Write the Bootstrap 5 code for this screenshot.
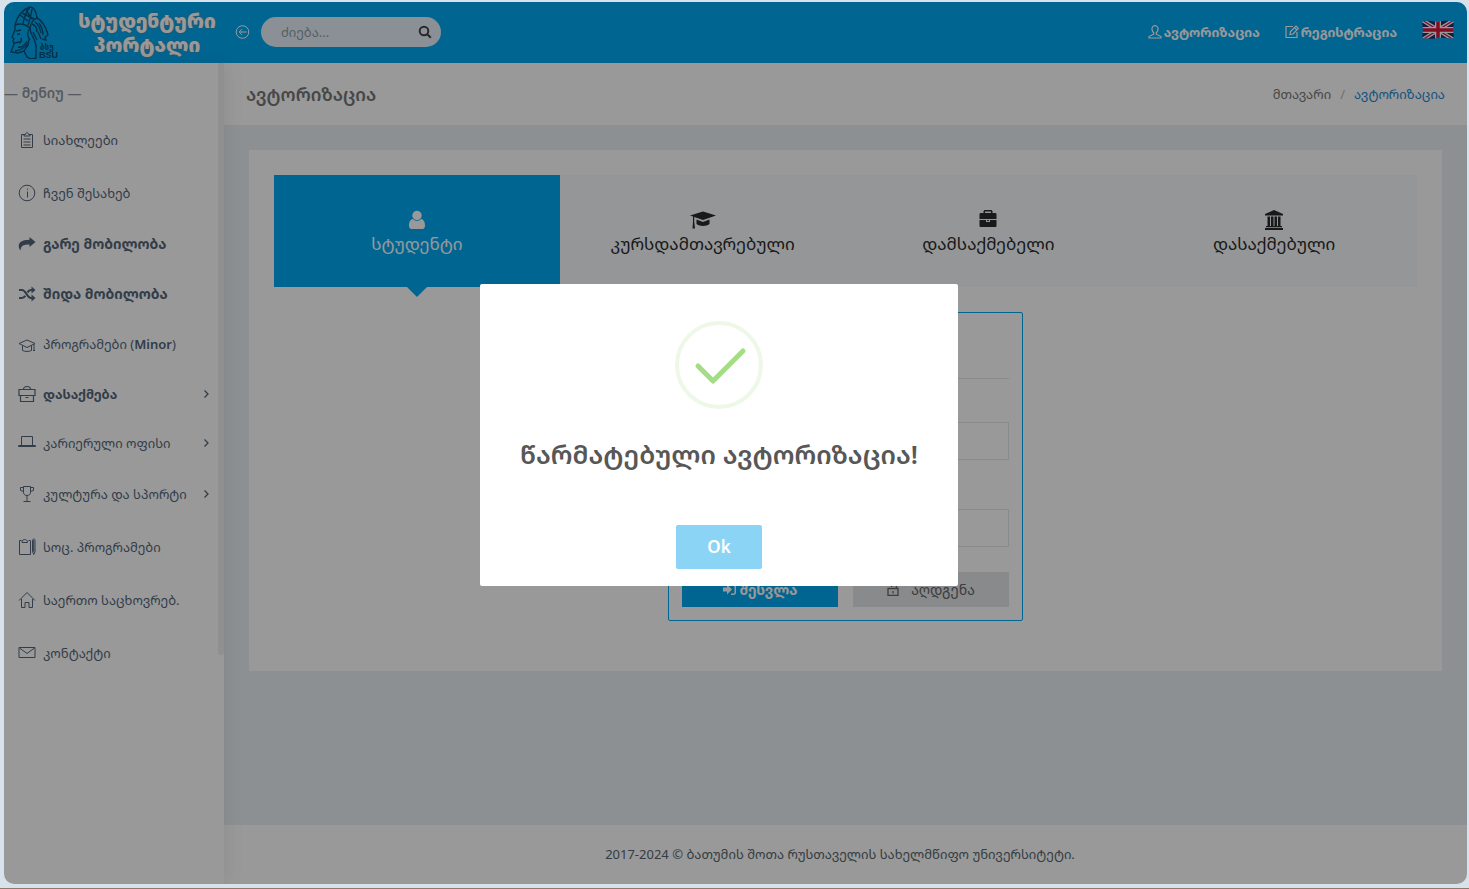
<!DOCTYPE html>
<html lang="ka">
<head>
<meta charset="utf-8">
<meta name="viewport" content="width=device-width, initial-scale=1">
<title>სტუდენტური პორტალი</title>
<link href="https://cdn.jsdelivr.net/npm/bootstrap@5.3.0/dist/css/bootstrap.min.css" rel="stylesheet">
<style>
  :root { --brand: #03a9f3; --ink: #54667a; }
  body { font-family: "Noto Sans", "Noto Sans Georgian", "DejaVu Sans", sans-serif; font-size: 13px; line-height: 20px; color: var(--ink); background: #d7e2ec; min-height: 100vh; padding: 2px 2px 4px 4px; border-bottom: 1px solid #8d7a68; }
  svg { display: block; flex: none; }
  a { text-decoration: none; color: inherit; }
  .portal { border-radius: 10px; background: #ebf1f4; }
  .topbar { background: var(--brand); height: 61px; color: #fff; padding-bottom: 2px; }
  .brand { width: 220px; padding-left: 6px; }
  .brand-name { flex: 1; font-size: 19px; line-height: 24px; font-weight: 900; color: #fff; text-shadow: 0 0 2px #777; padding: 2px 0 0 2px; }
  .top-tools { gap: 11px; padding-left: 11px; }
  .search-box { width: 180px; height: 30px; border-radius: 15px; background: #e6f1f8; padding: 0 9px 0 20px; }
  .search-box input { font-size: 13px; }
  .search-box input::placeholder { color: #8d9ea7; }
  .top-links { gap: 25px; padding-right: 13px; }
  .top-links a { gap: 2px; }
  .sidebar { width: 220px; background: #fff; box-shadow: 1px 0 20px rgba(0,0,0,.08); z-index: 1; }
  .side-scroll { width: 6px; height: 592px; background: #f0f0f0; border-radius: 0 0 4px 4px; top: 0; right: 0; }
  .menu-title { height: 50px; padding-top: 20px; font-size: 14px; color: #8d97a3; }
  .menu-link { height: 53px; padding: 0 14px; gap: 7px; }
  .menu-mid { height: 50px; }
  .menu-low { height: 48px; }
  .menu-big { font-size: 14px; }
  .ico { fill: none; stroke: currentColor; stroke-width: 1; }
  .page-title { background: #fff; height: 62px; padding: 0 22px; }
  .page-title h1 { font-size: 18px; line-height: 24px; color: #777; }
  .crumb { color: #777; gap: 9px; }
  .crumb .here { color: #1e88d2; }
  .work { padding: 25px; min-height: 600px; }
  .panel { background: #fff; padding: 25px 25px 50px; }
  .tab { flex: 1; height: 112px; border: 0; background: #f7fafc; color: #2b2b2b; font-size: 17px; line-height: 24px; padding-top: 3px; gap: 1px; }
  .tab.on { background: var(--brand); color: #fff; position: relative; }
  .tab.on::after { content: ""; position: absolute; top: 100%; left: 50%; margin-left: -10px; border: 10px solid transparent; border-top-color: var(--brand); border-bottom: 0; }
  .login { width: 355px; margin-top: 25px; border: 1px solid var(--brand); border-radius: 2px; padding: 65px 13px 13px; }
  .login hr { margin: 0 0 43px; border-color: #e4e7ea; opacity: 1; }
  .login .form-control { height: 38px; border: 1px solid #e4e7ea; border-radius: 0; margin-bottom: 49px; }
  .login .last { margin-bottom: 25px; }
  .acts { gap: 15px; }
  .act { flex: 1; height: 35px; border-radius: 0; font-size: 14px; line-height: 20px; padding: 0; }
  .act-go, .act-go:hover { background: var(--brand); color: #fff; }
  .act-reset, .act-reset:hover { background: #e4e7ea; color: #666; }
  .foot { background: #fff; height: 59px; color: #58666e; padding: 0 11px 2px 0; }
  .shade { inset: 0; background: rgba(0,0,0,.4); z-index: 5; padding: 0 33px 16px 0; }
  .alert-card { width: 478px; min-height: 302px; background: #fff; border-radius: 2px; padding: 37px 17px 17px; }
  .alert-card h2 { font-size: 26px; line-height: 40px; color: #575757; margin: 25px 0 51px; white-space: nowrap; }
  .ok { width: 86px; height: 44px; background: #8cd4f5; color: #fff; border: 0; border-radius: 2px; font-size: 17px; font-weight: 600; }
</style>
</head>
<body class="d-flex flex-column">
<div class="portal position-relative overflow-hidden flex-grow-1 d-flex flex-column">
  <header class="topbar d-flex align-items-center">
    <a href="#" class="brand d-flex align-items-center">
      <svg width="58" height="54" viewBox="0 0 58 54" fill="none" stroke="#035078" stroke-width="1.4">
        <path d="M5 20c2-8 6-15 15-18 4 0 6 4 7 11 4 2 9 8 11 17l-3 2 1 3-4-1"/>
        <path d="M5 20v5l-3 7 2 2-1 2 1 3-3 8 7 1 6-2 4-6 1-6M14 46l3 6c3 2 7 2 9 1V40M5 20c5-2 10-1 15 3"/>
        <path d="M20 2c-4 5-6 10-7 17M22 4c-1 6-2 11-4 16M16 5l6 9M10 10l8 6M12 8l12 6M27 13c-3 1-6 4-7 10 0 5 2 7 4 11l2 6"/>
        <path d="M22 19c3 1 5 4 5 8M25 17c3 2 5 6 6 11M29 18c3 4 4 8 4 12M20 23c-3 3-3 8 0 12M23 27l4 8M28 27l3 7M6 26l5-1M7 29h3M4 38l6-1M8 42c4 1 7-2 9-6M5 46c6-1 10-3 13-8M11 33c1 2 0 4-2 5"/>
        <g stroke="none" fill="#035078" font-size="9" font-weight="700" font-family="Liberation Sans, DejaVu Sans, sans-serif"><text x="30" y="45" font-size="8">ბსუ</text><text x="29" y="53">BSU</text></g>
      </svg>
      <span class="brand-name text-center">სტუდენტური<br>პორტალი</span>
    </a>
    <div class="top-tools d-flex align-items-center">
      <a href="#" aria-label="მენიუ"><svg class="ico" width="15" height="14" viewBox="0 0 14 14"><circle cx="7" cy="7" r="6.3"/><path d="M11 7H4M6.500 4.200L3.700 7l2.800 2.800"/></svg></a>
      <form class="search-box d-flex align-items-center" role="search">
        <input class="border-0 bg-transparent p-0 flex-grow-1 w-100" type="text" aria-label="ძიება" placeholder="ძიება...">
        <button type="button" aria-label="ძიება" class="border-0 bg-transparent p-0"><svg width="14" height="14" viewBox="0 0 14 14" fill="none" stroke="#444" stroke-width="2"><circle cx="6" cy="6" r="4.300"/><path d="M9 9l3.800 3.800"/></svg></button>
      </form>
    </div>
    <nav class="top-links ms-auto d-flex align-items-center fw-bold">
      <a href="#" class="d-flex align-items-center"><svg class="ico" width="14" height="14" viewBox="0 0 14 14"><path stroke-width="1.200" d="M7 .7C4.500.7 3.700 2.700 4 4.700c.2 1.500 1 2.500 1.700 3v1.500L1 11.500V13h12v-1.500L8.300 9.200V7.700c.7-.5 1.500-1.500 1.700-3C10.300 2.700 9.500.7 7 .7z"/></svg>ავტორიზაცია</a>
      <a href="#" class="d-flex align-items-center"><svg class="ico" width="14" height="14" viewBox="0 0 14 14"><path stroke-width="1.200" d="M8 1.500H1v11h11V7M5 9.500l.5-3L11 1l2.300 2.300L8 9zM9.500 2.500l2.300 2.300"/></svg>რეგისტრაცია</a>
      <a href="#" aria-label="English" class="pb-1"><svg width="32" height="20" viewBox="0 0 32 20"><defs><clipPath id="wave"><path d="M0 1.500C8-.5 12 2 16 1.500S26 0 32 1.500L31 10l1 8c-6 1-12-1-16 0s-10 1-16 0l1-8z"/></clipPath></defs><g clip-path="url(#wave)"><path fill="#232e72" d="M0 0h32v20H0z"/><path stroke="#fff" stroke-width="4" d="M0 0l32 20M32 0L0 20"/><path stroke="#d5163b" stroke-width="1.300" d="M0 0l32 20M32 0L0 20"/><path stroke="#fff" stroke-width="6" d="M16 0v20M0 10h32"/><path stroke="#d5163b" stroke-width="3.500" d="M16 0v20M0 10h32"/></g></svg></a>
    </nav>
  </header>
  <div class="d-flex flex-grow-1">
    <aside class="sidebar position-relative flex-shrink-0">
      <div class="side-scroll position-absolute"></div>
      <div class="menu-title fw-semibold">— მენიუ —</div>
      <nav>
        <a href="#" class="menu-link d-flex align-items-center"><svg class="ico" width="18" height="18" viewBox="0 0 18 18"><path d="M6 3.500H3.500v13h11v-13H12M6 5V3.500h1.500C7.500 1 10.500 1 10.500 3.500H12V5zM5.500 8h7M5.500 11h7M5.500 14h7"/></svg>სიახლეები</a>
        <a href="#" class="menu-link d-flex align-items-center"><svg class="ico" width="18" height="18" viewBox="0 0 18 18"><circle cx="9" cy="9" r="7.800"/><path d="M9.500 7.500v6M9.500 4.500v1.200"/></svg>ჩვენ შესახებ</a>
        <a href="#" class="menu-link menu-mid menu-big d-flex align-items-center fw-bold"><svg width="18" height="18" viewBox="0 0 18 18" fill="currentColor"><path d="M11.500 2l6 5-6 5V9.500C6 9.500 3 10 2.500 15.500-.5 12-1 4.800 11.500 4.800z"/></svg>გარე მობილობა</a>
        <a href="#" class="menu-link menu-mid menu-big d-flex align-items-center fw-bold"><svg width="18" height="18" viewBox="0 0 18 18" fill="none" stroke="currentColor" stroke-width="2.200"><path d="M1 5h3c4 0 5 8 9 8h1M1 13h3c1.500 0 2.500-1 3.200-2.300M9.500 7.500C10.300 6 11.500 5 13 5h1"/><path fill="currentColor" stroke="none" d="M13.500 1.500L17.500 5l-4 3.500zM13.500 9.500l4 3.500-4 3.500z"/></svg>შიდა მობილობა</a>
        <a href="#" class="menu-link menu-mid d-flex align-items-center"><svg class="ico" width="18" height="18" viewBox="0 0 18 18"><path d="M1 8.500L9 5l8 3.500L9 12.500zM4.500 10.500v5c3 1.300 6 1.300 9 0v-5M16 9v6.500M15 15.500h2"/></svg><span>პროგრამები (<span class="fw-semibold">Minor</span>)</span></a>
        <a href="#" class="menu-link menu-mid d-flex align-items-center fw-bold"><svg class="ico" width="18" height="18" viewBox="0 0 18 18"><path stroke-width="1.200" d="M1 4.500h16v6H1zM2.500 10.500v6h13v-6M5.500 4.500c0-4 7-4 7 0M7.500 12.500h3"/></svg>დასაქმება<svg class="ico ms-auto" width="7" height="10" viewBox="0 0 7 10"><path stroke-width="1.300" d="M1.500 1.500L5 5 1.500 8.500"/></svg></a>
        <a href="#" class="menu-link menu-low d-flex align-items-center"><svg class="ico" width="18" height="18" viewBox="0 0 18 18"><path d="M3.500 11.500v-9h11v9M.5 11.500h17v1H.5z"/></svg>კარიერული ოფისი<svg class="ico ms-auto" width="7" height="10" viewBox="0 0 7 10"><path stroke-width="1.300" d="M1.500 1.500L5 5 1.500 8.500"/></svg></a>
        <a href="#" class="menu-link d-flex align-items-center"><svg class="ico" width="18" height="18" viewBox="0 0 18 18"><path d="M5.500 1.500h7v6c0 4-7 4-7 0zM5.500 2.500h-3v3l3 1M12.500 2.500h3v3l-3 1M9 10.500v6M5.500 16.500h7"/></svg>კულტურა და სპორტი<svg class="ico ms-auto" width="7" height="10" viewBox="0 0 7 10"><path stroke-width="1.300" d="M1.500 1.500L5 5 1.500 8.500"/></svg></a>
        <a href="#" class="menu-link d-flex align-items-center"><svg class="ico" width="18" height="18" viewBox="0 0 18 18"><path d="M3.500 2.500h-2v14h11v-14h-2M4 4.500c-.5-4 6-4 5.500 0zM14.500 2.500c0-2 2.500-2 2.500 0v11l-1.200 3-1.300-3zM15.700 2v12"/></svg>სოც. პროგრამები</a>
        <a href="#" class="menu-link d-flex align-items-center"><svg class="ico" width="18" height="18" viewBox="0 0 18 18"><path d="M1 9.500l8-8 8 8M3.500 8v8.500h3.500v-5h4v5h3.500V8"/></svg>საერთო საცხოვრებ.</a>
        <a href="#" class="menu-link d-flex align-items-center"><svg class="ico" width="18" height="18" viewBox="0 0 18 18"><path d="M1 3.500h16v10H1zM1.500 4L9 9.500 16.500 4"/></svg>კონტაქტი</a>
      </nav>
    </aside>
    <div class="flex-grow-1 d-flex flex-column">
      <div class="page-title d-flex align-items-center justify-content-between">
        <h1 class="m-0 fw-semibold">ავტორიზაცია</h1>
        <nav class="crumb d-flex" aria-label="breadcrumb"><a href="#">მთავარი</a><span class="opacity-50">/</span><a href="#" class="here">ავტორიზაცია</a></nav>
      </div>
      <main class="work flex-grow-1">
        <section class="panel">
          <div class="d-flex">
            <button type="button" class="tab on d-flex flex-column align-items-center justify-content-center"><svg width="26" height="22" viewBox="0 0 26 22" fill="currentColor"><circle cx="13" cy="6.500" r="4.700"/><path d="M9 10c2.500 2.500 5.500 2.500 8 0 3 .5 4 3.500 4 6.500 0 2-1 3.500-2.500 3.500h-11C6 20 5 18.500 5 16.500c0-3 1-6 4-6.500z"/></svg>სტუდენტი</button>
            <button type="button" class="tab d-flex flex-column align-items-center justify-content-center"><svg width="26" height="22" viewBox="0 0 26 22" fill="currentColor"><path d="M13 2.500l13 4L13 11 0 6.500zM6.500 10.500L13 13l6.500-2.500V15c-3 2.500-10 2.500-13 0zM3 7.500h1.200v5l.8 7H2.500l.5-7z"/></svg>კურსდამთავრებული</button>
            <button type="button" class="tab d-flex flex-column align-items-center justify-content-center"><svg width="26" height="22" viewBox="0 0 26 22" fill="currentColor"><path fill-rule="evenodd" d="M8.500 4V2l1-1h7l1 1v2H20c1 0 1.500.5 1.500 1.500V10h-17V5.500C4.500 4.500 5 4 6 4zM10 4h6V2.500h-6zM4.500 11H11v2h4v-2h6.500v5.500c0 1-.5 1.500-1.500 1.500H6c-1 0-1.500-.5-1.500-1.500zM12 11h2v1h-2z"/></svg>დამსაქმებელი</button>
            <button type="button" class="tab d-flex flex-column align-items-center justify-content-center"><svg width="26" height="22" viewBox="0 0 26 22" fill="currentColor"><path d="M13 1l9 4v1.500H4V5zM6.500 7.500H9V17H6.500zM10 7.500h2.500V17H10zM13.500 7.500H16V17h-2.500zM17 7.500h2.500V17H17zM5 17h16v1.300H5zM4 19h18v2H4z"/></svg>დასაქმებული</button>
          </div>
          <form class="login mx-auto">
            <hr>
            <input class="form-control" type="text" aria-label="მომხმარებელი">
            <input class="form-control last" type="password" aria-label="პაროლი">
            <div class="acts d-flex">
              <button type="button" class="btn act act-go fw-bold d-flex align-items-center justify-content-center"><svg class="me-1" width="13" height="13" viewBox="0 0 13 13" fill="currentColor"><path d="M0 4.500h4V1.500L9 6.500l-5 5v-3H0z"/><path d="M8 1h2.500C12 1 13 2 13 3.500v6c0 1.500-1 2.500-2.500 2.500H8v-1.500h2.200c.8 0 1.300-.5 1.300-1.300V3.800c0-.8-.5-1.300-1.300-1.300H8z"/></svg>შესვლა</button>
              <button type="button" class="btn act act-reset d-flex align-items-center justify-content-center"><svg class="ico" width="12" height="12" viewBox="0 0 12 12"><path stroke-width="1.300" d="M1 4.500h10v7H1zM9.500 4.500v-3h-5v1.500M6 7v2.500"/></svg><span class="ms-2 ps-1">აღდგენა</span></button>
            </div>
          </form>
        </section>
      </main>
      <footer class="foot d-flex align-items-center justify-content-center">2017-2024 © ბათუმის შოთა რუსთაველის სახელმწიფო უნივერსიტეტი.</footer>
    </div>
  </div>
  <div class="shade position-absolute d-flex align-items-center justify-content-center">
    <div class="alert-card text-center d-flex flex-column align-items-center" role="dialog" aria-modal="true" aria-labelledby="alert-title">
      <svg width="88" height="88" viewBox="0 0 88 88" fill="none"><circle cx="44" cy="44" r="42" stroke="#edf8e7" stroke-width="4"/><path d="M23 45l15 15 30-30" stroke="#a5dc86" stroke-width="5" stroke-linecap="round" stroke-linejoin="round"/></svg>
      <h2 id="alert-title" class="fw-semibold">წარმატებული ავტორიზაცია!</h2>
      <button type="button" class="ok">Ok</button>
    </div>
  </div>
</div>
<script src="https://cdn.jsdelivr.net/npm/bootstrap@5.3.0/dist/js/bootstrap.bundle.min.js"></script>
</body>
</html>
